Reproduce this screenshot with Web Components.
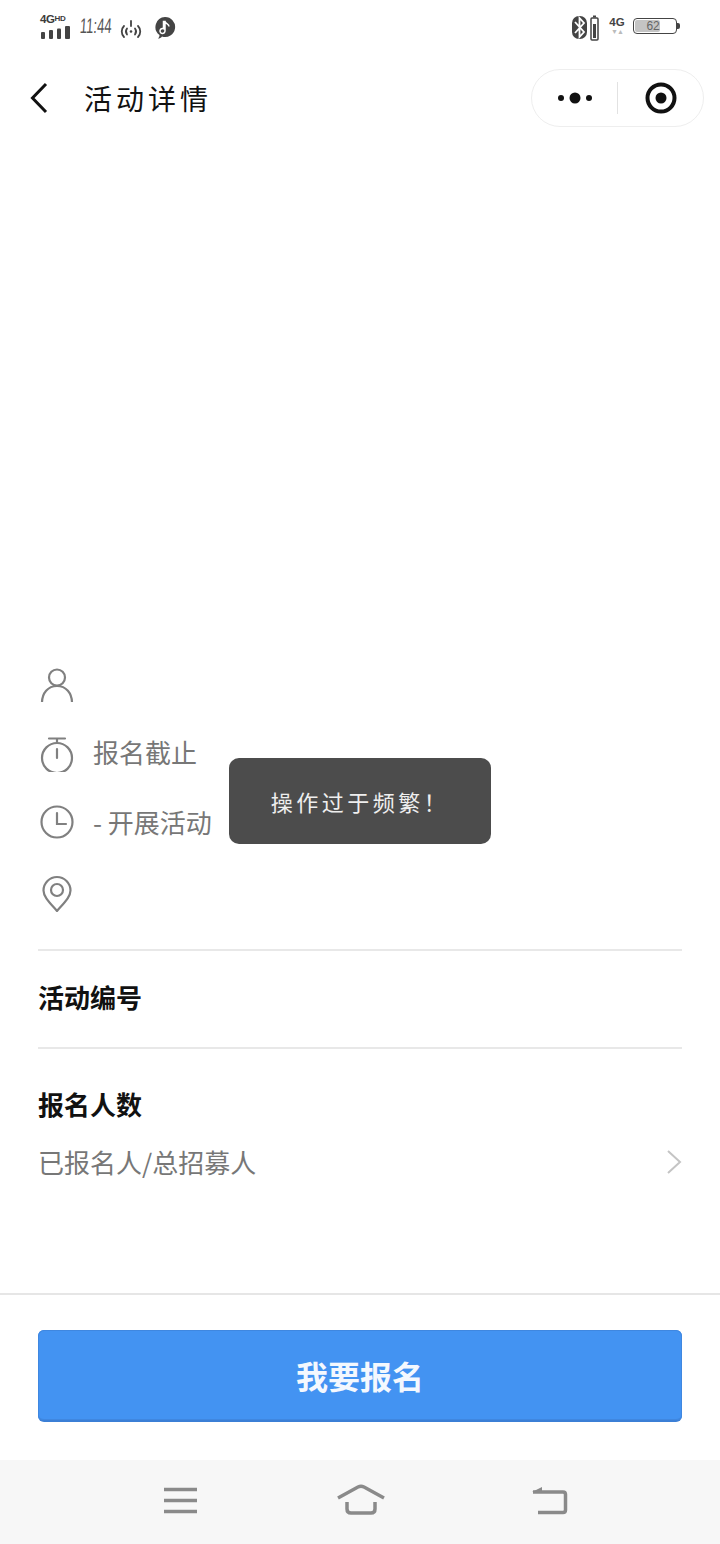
<!DOCTYPE html>
<html lang="zh"><head><meta charset="utf-8"><title>活动详情</title>
<style>
html,body{margin:0;padding:0;background:#fff}
body{font-family:"Noto Sans CJK SC","Noto Sans",sans-serif}
</style></head><body>
<app-page>
  <status-bar slot="top"></status-bar>
  <nav-header slot="top" title-text="活动详情"></nav-header>
  <info-row icon="person"></info-row>
  <info-row icon="timer">报名截止</info-row>
  <info-row icon="clock">- 开展活动</info-row>
  <info-row icon="pin"></info-row>
  <detail-section heading="活动编号" pad="29px 0 33px" tall="98"></detail-section>
  <detail-section heading="报名人数" tall="186" arrow>已报名人/总招募人</detail-section>
  <sign-footer slot="footer">我要报名</sign-footer>
  <system-nav slot="footer"></system-nav>
  <toast-msg slot="overlay">操作过于频繁！</toast-msg>
</app-page>
<script>
const el=(name,html,setup)=>customElements.define(name,class extends HTMLElement{
  connectedCallback(){ if(this.shadowRoot) return; const s=this.attachShadow({mode:'open'}); s.innerHTML=typeof html==='function'?html(this):html; }
});
const ICONS={
 person:'<circle cx="17" cy="12.5" r="8"/><path d="M2 38C2 28 8 21 17 21s15 7 15 17"/>',
 timer:'<path d="M9 3.5H25M17 3.5V8M17 14V23"/><circle cx="17" cy="23" r="15"/>',
 clock:'<circle cx="17" cy="17" r="15.5"/><path d="M17 8V19H26"/>',
 pin:'<path d="M17 36C10 28 3.5 22 3.5 15.5a13.5 13.5 0 0 1 27 0C30.500 22 24 28 17 36Z"/><circle cx="17" cy="15" r="6"/>'
};
el('app-page',`<style>
:host{display:flex;flex-direction:column;width:720px;height:1544px;position:relative;overflow:hidden;background:#fff}
.top{display:block}
.main{flex:1;display:flex;flex-direction:column;justify-content:flex-end;padding:0 38px}
.f{display:block}
.o{position:absolute;inset:0;display:flex;align-items:flex-start;justify-content:center;padding-top:758px;box-sizing:border-box;pointer-events:none}
</style><div class="top"><slot name="top"></slot></div><div class="main"><slot></slot></div><div class="f"><slot name="footer"></slot></div><div class="o"><slot name="overlay"></slot></div>`);
el('status-bar',`<style>
:host{display:flex;justify-content:space-between;height:52px;box-sizing:border-box;padding:13px 40px 0;font-family:"Liberation Sans",sans-serif;color:#444}
.l,.r{display:flex;align-items:flex-start}
.net{width:32px;display:flex;flex-direction:column}
.net b{font-size:11.500px;line-height:12px;letter-spacing:-.4px;color:#3c3c3c;white-space:nowrap}
.net b small{font-size:8px;vertical-align:2px}
.net svg{margin-top:1px}
.time{font-size:21px;line-height:26px;font-weight:400;color:#555;margin-left:8px;width:35px;transform:scaleX(.62) skewX(-6deg);transform-origin:0 50%;white-space:nowrap}
.sig{margin-left:4px;margin-top:5px}
.mus{margin-left:11px;margin-top:3px}
.g{margin:4px 0 0 6px;font-size:11.500px;font-weight:700;line-height:11px;text-align:center;width:18px;color:#444}
.g i{display:block;font-style:normal;font-size:7px;line-height:7px;color:#bbb;letter-spacing:-1px}
.bat{position:relative;margin:5px 0 0 7px;width:44px;height:16px;border:1.500px solid #444;border-radius:4px;box-sizing:border-box;padding:1px}
.bat u{display:block;height:100%;width:62%;background:#c4c4c4;border-radius:2px;text-decoration:none;font-size:12px;line-height:12px;text-align:right;color:#666;font-stretch:condensed}
.tip{width:3px;height:6px;background:#444;margin:10px 0 0 0;border-radius:0 2px 2px 0}
</style>
<div class="l"><div class="net"><b>4G<small>HD</small></b><svg width="31" height="13" fill="#444"><rect x="1" y="6" width="4" height="7" rx="1"/><rect x="9" y="4" width="4" height="9" rx="1"/><rect x="17" y="2.500" width="4" height="10.500" rx="1"/><rect x="25" y="0" width="5" height="13" rx="1"/></svg></div>
<div class="time">11:44</div>
<svg class="sig" width="24" height="22" viewBox="0 0 24 22" fill="none" stroke="#444" stroke-width="1.800" stroke-linecap="round"><path d="M5 8C2 11 2 16 5 19M19 8c3 3 3 8 0 11M8 10.500c-1.500 2-1.500 4 0 6M16 10.500c1.500 2 1.500 4 0 6M12 3V8"/><circle cx="12" cy="13.500" r="1.300" fill="#444" stroke="none"/></svg>
<svg class="mus" width="22" height="24" viewBox="0 0 22 24"><path d="M11 1a10 10 0 1 1-3 19.500c-1 1.500-2.500 2-4 2 1-1 1.500-2 1.500-3.500A10 10 0 0 1 11 1Z" fill="#444"/><path d="M11 5.500v9.500a2.500 2.500 0 1 1-1.500-2.300V5.500ZM11 5.500c1 2.500 4 2.500 4 5" fill="none" stroke="#fff" stroke-width="1.500"/></svg></div>
<div class="r"><svg width="30" height="26" viewBox="0 0 30 26" style="margin-top:2px;margin-left:-4px"><rect x="0" y="1" width="15" height="23" rx="7" fill="#444"/><path d="M3 7l9 10-4.500 5V3L12 8l-9 10" fill="none" stroke="#fff" stroke-width="1.800"/><rect x="19" y="3" width="7" height="22" rx="1" fill="none" stroke="#444" stroke-width="1.500"/><rect x="21" y="9" width="3" height="14" fill="#444"/><rect x="21" y="0.500" width="3" height="2" fill="#444"/></svg>
<div class="g">4G<i>▼▲</i></div><div class="bat"><u>62</u></div><div class="tip"></div></div>`);
el('nav-header',h=>`<style>
:host{display:flex;align-items:center;height:92px;box-sizing:border-box;padding:0 16px 0 30px;position:relative}
svg.b{width:18px;height:32px;flex:none}
h1{margin:0 0 0 36px;flex:1;font:400 28px/36px "Noto Sans CJK SC",sans-serif;letter-spacing:4px;color:#111;white-space:nowrap}
.cap{display:flex;align-items:center;width:173px;height:58px;box-sizing:border-box;border:1px solid #eee;border-radius:29px;margin-bottom:0}
.c{flex:1;display:flex;align-items:center;justify-content:center}
.sep{width:1px;height:32px;background:#e2e2e2}
</style><svg class="b" viewBox="0 0 18 32" fill="none" stroke="#111" stroke-width="3"><path d="M16 2 2.500 16 16 30"/></svg><h1>${h.getAttribute('title-text')}</h1>
<div class="cap"><div class="c"><svg width="36" height="14" viewBox="0 0 36 14" fill="#111"><circle cx="4" cy="7" r="3"/><circle cx="18" cy="7" r="5.500"/><circle cx="32" cy="7" r="3"/></svg></div><div class="sep"></div><div class="c"><svg width="32" height="32" viewBox="0 0 32 32"><circle cx="16" cy="16" r="13.500" fill="none" stroke="#111" stroke-width="4"/><circle cx="16" cy="16" r="5.500" fill="#111"/></svg></div></div>`);
el('info-row',h=>`<style>
:host{display:flex;align-items:center;height:70px;color:#777;font:400 26px/36px "Noto Sans CJK SC",sans-serif}
svg{width:38px;height:40px;flex:none;margin:0 17px 0 0;}
</style><svg viewBox="-2 -3 38 40" fill="none" stroke="#808080" stroke-width="2.200" stroke-linecap="round">${ICONS[h.getAttribute('icon')]}</svg><span><slot></slot></span>`);
el('detail-section',h=>`<style>
:host{display:block;box-sizing:border-box;height:${h.getAttribute('tall')}px;border-top:2px solid #e8e8e8;margin-top:${h.hasAttribute('arrow')?0:22}px}
h2{margin:0;font:700 26px/36px "Noto Sans CJK SC",sans-serif;color:#111;padding-top:${h.hasAttribute('arrow')?37:28}px}
.v{display:flex;align-items:center;justify-content:space-between;margin-top:22px;color:#777;font:400 26px/36px "Noto Sans CJK SC",sans-serif}
svg{width:16px;height:26px;margin-right:0}
</style><h2>${h.getAttribute('heading')}</h2>${h.hasAttribute('arrow')?`<div class="v"><span><slot></slot></span><svg viewBox="0 0 16 26" fill="none" stroke="#c4c4c4" stroke-width="2"><path d="M2 2 14 13 2 24"/></svg></div>`:''}`);
el('sign-footer',`<style>
:host{display:block;box-sizing:border-box;height:167px;margin-top:60px;border-top:2px solid #e6e6e6;padding:35px 38px 0;background:#fff}
button{display:block;width:100%;height:92px;border:0;border-bottom:2px solid #3b7fd6;border-radius:6px;background:#4393f2;box-shadow:inset 0 0 0 1px #3f87e0;color:#f4f8fe;font:700 32px/44px "Noto Sans CJK SC",sans-serif;padding:0}
</style><button><slot></slot></button>`);
el('system-nav',`<style>
:host{display:flex;align-items:flex-start;height:84px;background:#f7f7f7;box-sizing:border-box;position:relative;padding-top:26px}
svg{flex:none;fill:none;stroke:#8a8a8a;stroke-width:3.500;}
</style>
<svg style="margin-left:164px" width="33" height="30"><path d="M0 3.500H33M0 14.500H33M0 25.500H33"/></svg>
<svg style="margin-left:140px;margin-top:-2px" width="48" height="32" stroke-linejoin="round"><path d="M1 14 21 3Q24 1.500 27 3L47 14M10 18V25Q10 29 14 29H34Q38 29 38 25V18"/></svg>
<svg style="margin-left:147px" width="36" height="30" ><path d="M1 6H31Q33.500 6 33.500 8.500V24Q33.500 26.500 31 26.500H6"/><path d="M0 6 10 1V6Z" fill="#8a8a8a" stroke="none"/></svg>`);
el('toast-msg',`<style>
:host{display:flex;align-items:center;justify-content:center;width:262px;height:86px;background:#4c4c4c;border-radius:10px;color:#eee;font:400 22px/30px "Noto Sans CJK SC",sans-serif;letter-spacing:3.500px;box-sizing:border-box;white-space:nowrap}
</style><slot></slot>`);
</script>
</body></html>
